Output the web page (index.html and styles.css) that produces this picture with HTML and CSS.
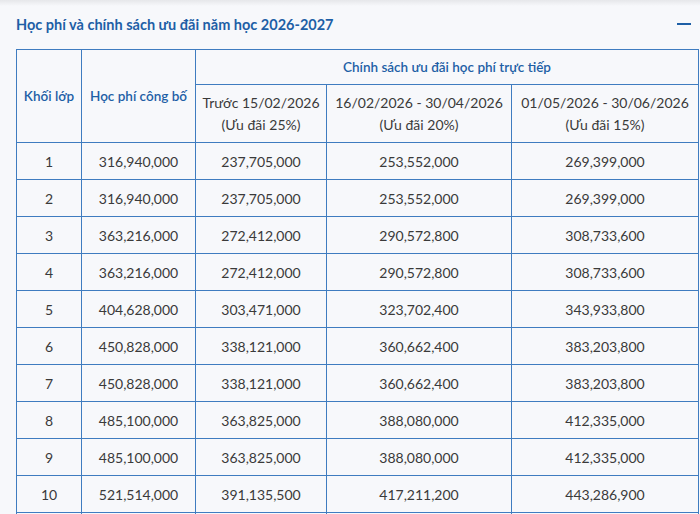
FILE: index.html
```html
<!DOCTYPE html>
<html lang="vi">
<head>
<meta charset="utf-8">
<link rel="stylesheet" href="styles.css">
</head>
<body>
<div class="topshade"></div>
<section class="panel">
  <div class="panel-head">
    <h2 class="title">Học phí và chính sách ưu đãi năm học 2026-2027</h2>
    <span class="collapse"></span>
  </div>
  <table class="fees">
    <colgroup>
      <col class="c1"><col class="c2"><col class="c3"><col class="c4"><col class="c5">
    </colgroup>
    <thead>
      <tr class="h1">
        <th rowspan="2">Khối lớp</th>
        <th rowspan="2">Học phí công bố</th>
        <th colspan="3">Chính sách ưu đãi học phí trực tiếp</th>
      </tr>
      <tr class="h2">
        <td>Trước 15/02/2026<br>(Ưu đãi 25%)</td>
        <td>16/02/2026 - 30/04/2026<br>(Ưu đãi 20%)</td>
        <td>01/05/2026 - 30/06/2026<br>(Ưu đãi 15%)</td>
      </tr>
    </thead>
    <tbody>
      <tr><td>1</td><td>316,940,000</td><td>237,705,000</td><td>253,552,000</td><td>269,399,000</td></tr>
      <tr><td>2</td><td>316,940,000</td><td>237,705,000</td><td>253,552,000</td><td>269,399,000</td></tr>
      <tr><td>3</td><td>363,216,000</td><td>272,412,000</td><td>290,572,800</td><td>308,733,600</td></tr>
      <tr><td>4</td><td>363,216,000</td><td>272,412,000</td><td>290,572,800</td><td>308,733,600</td></tr>
      <tr><td>5</td><td>404,628,000</td><td>303,471,000</td><td>323,702,400</td><td>343,933,800</td></tr>
      <tr><td>6</td><td>450,828,000</td><td>338,121,000</td><td>360,662,400</td><td>383,203,800</td></tr>
      <tr><td>7</td><td>450,828,000</td><td>338,121,000</td><td>360,662,400</td><td>383,203,800</td></tr>
      <tr><td>8</td><td>485,100,000</td><td>363,825,000</td><td>388,080,000</td><td>412,335,000</td></tr>
      <tr><td>9</td><td>485,100,000</td><td>363,825,000</td><td>388,080,000</td><td>412,335,000</td></tr>
      <tr><td>10</td><td>521,514,000</td><td>391,135,500</td><td>417,211,200</td><td>443,286,900</td></tr>
      <tr><td></td><td></td><td></td><td></td><td></td></tr>
    </tbody>
  </table>
</section>
</body>
</html>
```

FILE: styles.css
```css
html, body {
  margin: 0;
  padding: 0;
  background: #f7f8fb;
  font-family: Lato, "Noto Sans", sans-serif;
  color: #3a3a3a;
  overflow: hidden;
}
.topshade {
  height: 6px;
  background: linear-gradient(#e6e7ea, #f7f8fb);
}
.panel {
  padding: 0 2px 0 16px;
}
.panel-head {
  display: flex;
  justify-content: space-between;
  align-items: center;
  height: 36px;
}
.title {
  margin: 0;
  font-size: 14.5px;
  font-weight: 700;
  color: #1e5fa6;
}
.collapse {
  width: 14px;
  height: 2px;
  background: #1e5fa6;
  margin-right: 7px;
}
.fees {
  border-collapse: collapse;
  width: 682px;
  margin-top: 7px;
  table-layout: fixed;
  font-size: 14px;
}
.c1 { width: 65px; }
.c2 { width: 114px; }
.c3 { width: 131px; }
.c4 { width: 185px; }
.c5 { width: 187px; }
.fees th, .fees td {
  border: 1px solid #3f7cc0;
  text-align: center;
  padding: 0;
}
.fees th {
  color: #1e5fa6;
  font-weight: 600;
  font-size: 13.5px;
}
.h1 th { height: 34px; }
.h2 td { height: 57px; line-height: 22px; }
.fees tbody td { height: 36px; }
```
